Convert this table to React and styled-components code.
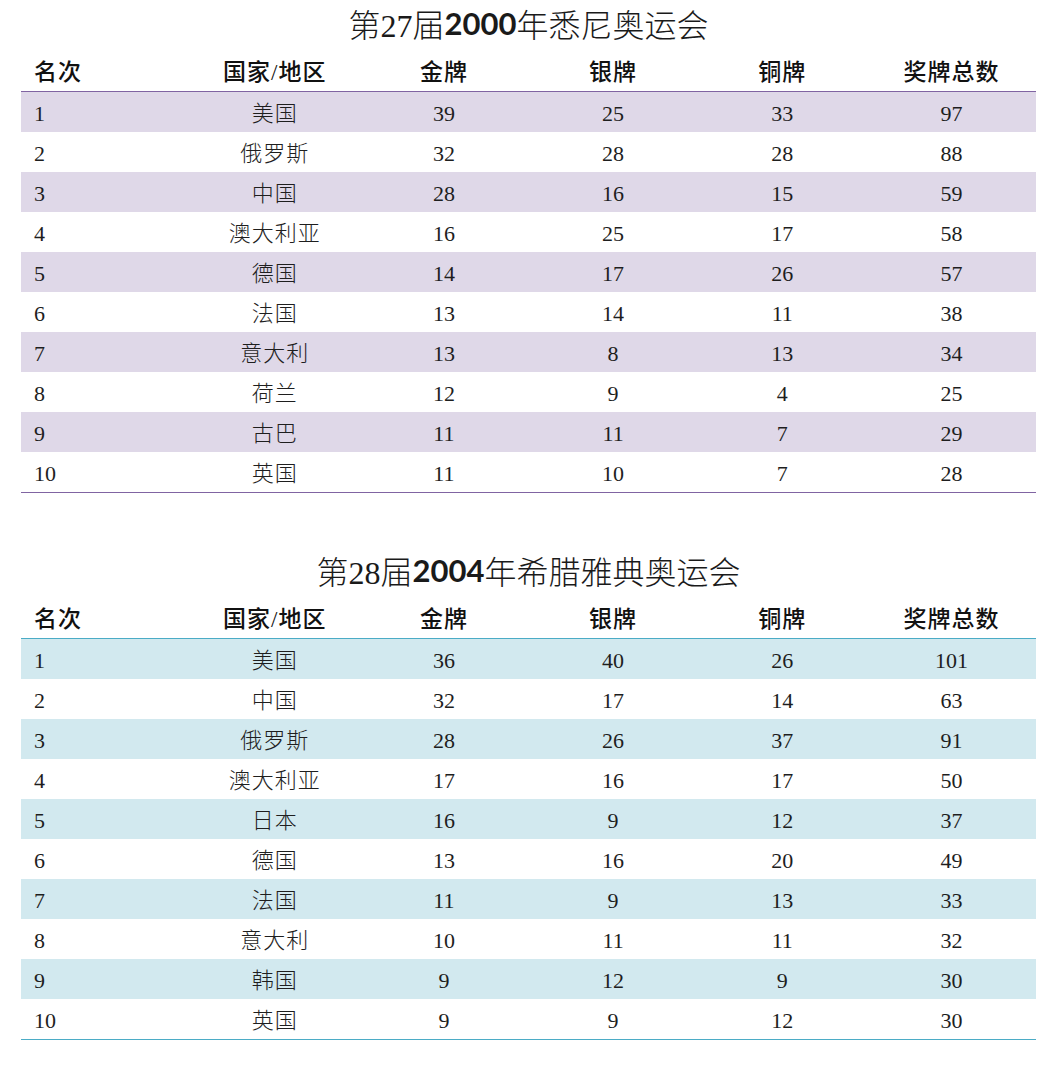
import styled, { createGlobalStyle } from 'styled-components'

const GlobalStyle = createGlobalStyle`
  body {
    margin: 0;
    background: #ffffff;
    color: #1e1e1e;
    font-family: 'Liberation Serif', 'Noto Sans CJK SC', serif;
  }
`

const themes = {
  purple: { stripe: '#dfd8e8', line: '#8064a2' },
  blue: { stripe: '#d2e9ef', line: '#4bacc6' },
}

const columns = ['名次', '国家/地区', '金牌', '银牌', '铜牌', '奖牌总数']

const tables = [
  {
    key: 'sydney',
    edition: '27',
    year: '2000',
    city: '悉尼奥运会',
    theme: 'purple',
    rows: [
      [1, '美国', 39, 25, 33, 97],
      [2, '俄罗斯', 32, 28, 28, 88],
      [3, '中国', 28, 16, 15, 59],
      [4, '澳大利亚', 16, 25, 17, 58],
      [5, '德国', 14, 17, 26, 57],
      [6, '法国', 13, 14, 11, 38],
      [7, '意大利', 13, 8, 13, 34],
      [8, '荷兰', 12, 9, 4, 25],
      [9, '古巴', 11, 11, 7, 29],
      [10, '英国', 11, 10, 7, 28],
    ],
  },
  {
    key: 'athens',
    edition: '28',
    year: '2004',
    city: '希腊雅典奥运会',
    theme: 'blue',
    rows: [
      [1, '美国', 36, 40, 26, 101],
      [2, '中国', 32, 17, 14, 63],
      [3, '俄罗斯', 28, 26, 37, 91],
      [4, '澳大利亚', 17, 16, 17, 50],
      [5, '日本', 16, 9, 12, 37],
      [6, '德国', 13, 16, 20, 49],
      [7, '法国', 11, 9, 13, 33],
      [8, '意大利', 10, 11, 11, 32],
      [9, '韩国', 9, 12, 9, 30],
      [10, '英国', 9, 9, 12, 30],
    ],
  },
]

function MedalTable({ data }) {
  const theme = themes[data.theme]
  return (
    <Section>
      <Title>
        第{data.edition}届<Year>{data.year}</Year>年{data.city}
      </Title>
      <Grid line={theme.line}>
        <HeadRow line={theme.line}>
          {columns.map((c, i) => (
            <HeadCell key={c} first={i === 0}>
              {c}
            </HeadCell>
          ))}
        </HeadRow>
        {data.rows.map((r, i) => (
          <Row key={r[0]} bg={i % 2 === 0 ? theme.stripe : '#ffffff'}>
            {r.map((v, j) => (
              <Cell key={j} first={j === 0} wide={j === 1}>
                {v}
              </Cell>
            ))}
          </Row>
        ))}
      </Grid>
    </Section>
  )
}

function App() {
  return (
    <>
      <GlobalStyle />
      <Page>
        {tables.map((t) => (
          <MedalTable key={t.key} data={t} />
        ))}
      </Page>
    </>
  )
}

const Page = styled.div`
  width: 1015px;
  margin-left: 21px;
  display: flex;
  flex-direction: column;
  row-gap: 54px;
`

const Section = styled.div`
  display: flex;
  flex-direction: column;
`

const Title = styled.div`
  height: 52px;
  display: flex;
  align-items: center;
  justify-content: center;
  font-size: 32px;
  font-weight: 300;
  color: #1a1a1a;
  font-family: 'Liberation Serif', 'Noto Sans CJK SC', serif;
  padding-bottom: 6px;
  box-sizing: border-box;
`

const Year = styled.span`
  font-family: 'Lato', 'Open Sans', sans-serif;
  font-weight: 700;
  font-size: 31px;
`

const Grid = styled.div`
  display: flex;
  flex-direction: column;
  border-bottom: 1px solid ${({ line }) => line};
`

const Row = styled.div`
  display: grid;
  grid-template-columns: repeat(6, 1fr);
  height: 40px;
  align-items: center;
  background: ${({ bg }) => bg};
`

const HeadRow = styled(Row)`
  border-bottom: 1px solid ${({ line }) => line};
  box-sizing: border-box;
  padding-top: 2px;
`

const Cell = styled.div`
  font-size: 22px;
  font-weight: 300;
  text-align: ${({ first }) => (first ? 'left' : 'center')};
  padding-left: ${({ first }) => (first ? '13px' : '0')};
  padding-top: 3px;
  letter-spacing: ${({ wide }) => (wide ? '1px' : '0')};
  color: #1e1e1e;
  line-height: 1;
`

const HeadCell = styled(Cell)`
  font-size: 23px;
  font-weight: 500;
  letter-spacing: 1px;
  padding-top: 0;
  color: #111111;
`

export default App
